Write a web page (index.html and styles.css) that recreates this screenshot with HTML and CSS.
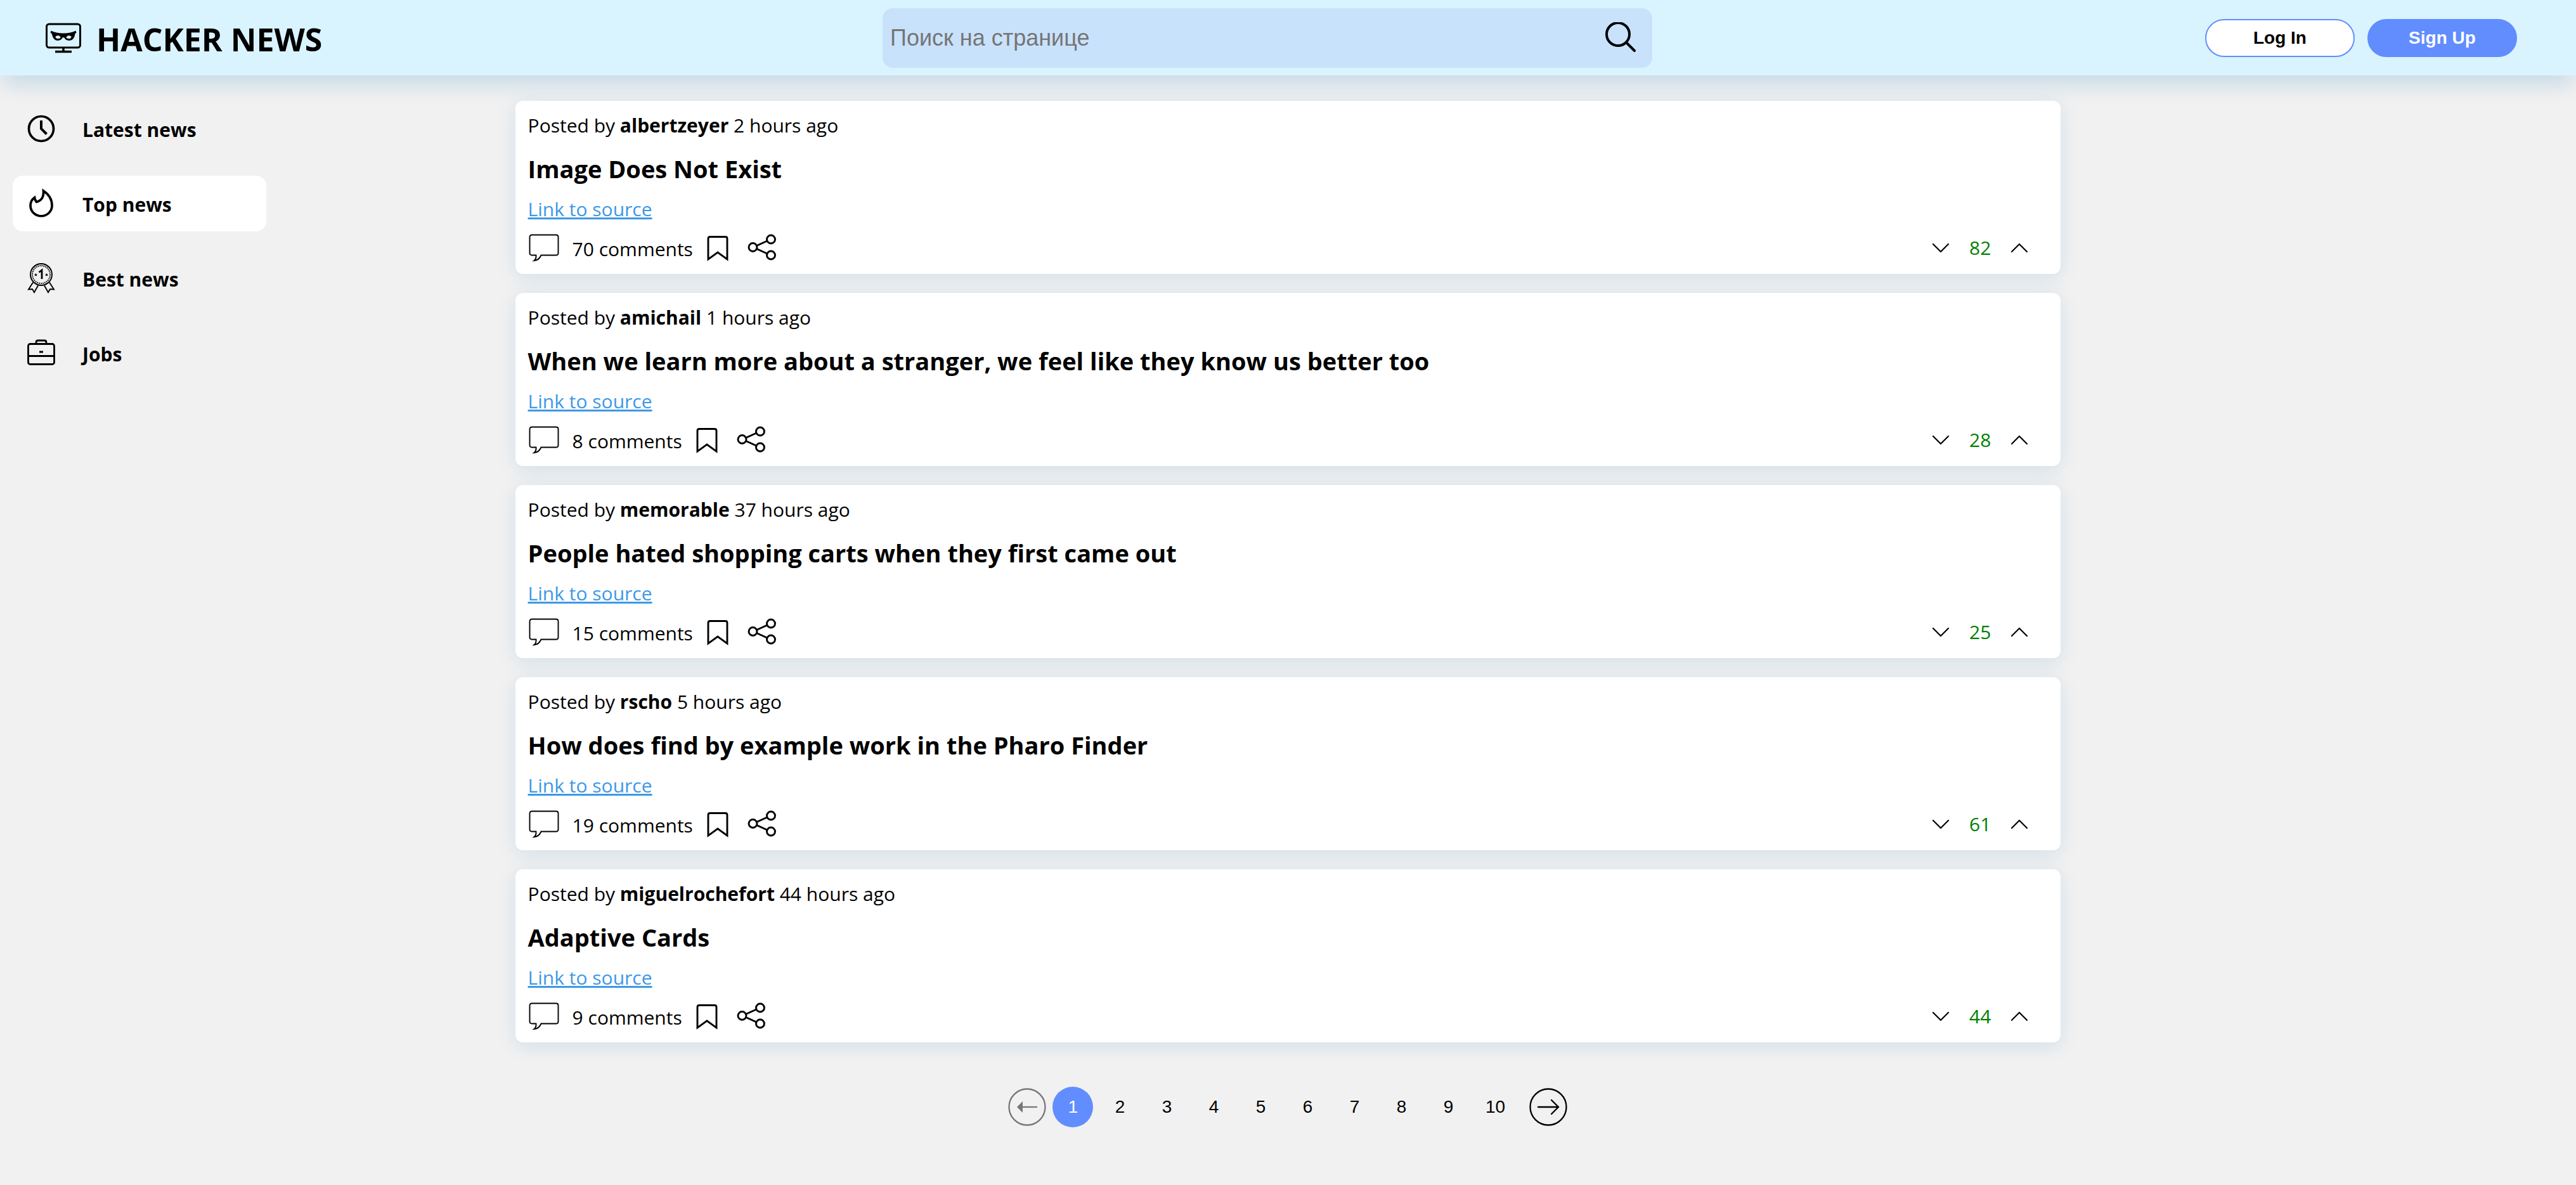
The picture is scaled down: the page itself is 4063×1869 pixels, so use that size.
FILE: index.html
```html
<!DOCTYPE html>
<html lang="en">
<head>
<meta charset="utf-8">
<meta name="viewport" content="width=device-width, initial-scale=1">
<title>Hacker News</title>
<link rel="stylesheet" href="styles.css">
</head>
<body>
<svg class="sprite" aria-hidden="true">
  <symbol id="i-comment" viewBox="0 0 50 50"><path d="M6 4.500h38q3.500 0 3.500 3.500v25q0 3.500-3.500 3.500H20.500Q17 44.500 9.500 45Q13 42.500 12.500 36.500H6q-3.500 0-3.500-3.500v-25Q2.500 4.500 6 4.500z" fill="none" stroke="#000" stroke-width="1.900"/></symbol>
  <symbol id="i-mark" viewBox="0 0 50 50"><path d="M13 7.500h24q3 0 3 3V43L25 32 10 43V10.500q0-3 3-3z" fill="none" stroke="#000" stroke-width="2.900"/></symbol>
  <symbol id="i-share" viewBox="0 0 50 50"><g fill="none" stroke="#000" stroke-width="2.900"><circle cx="10.500" cy="24" r="6.500"/><circle cx="39" cy="11.500" r="6.500"/><circle cx="39" cy="36.500" r="6.500"/><path d="M16.500 21.500l16.500-7.500M16.500 26.500l16.500 7.500"/></g></symbol>
  <symbol id="i-down" viewBox="0 0 50 50"><path d="M13 19l12 12 12-12" fill="none" stroke="#000" stroke-width="2.200" stroke-linecap="round" stroke-linejoin="round"/></symbol>
  <symbol id="i-up" viewBox="0 0 50 50"><path d="M13 31l12-12 12 12" fill="none" stroke="#000" stroke-width="2.200" stroke-linecap="round" stroke-linejoin="round"/></symbol>
</svg>

<header class="header">
  <a class="logo" href="#">
    <svg class="logo-icon" viewBox="0 0 56 48" aria-hidden="true">
      <rect x="1.500" y="2" width="53" height="37" rx="4" fill="none" stroke="#000" stroke-width="3"/>
      <path d="M28 39v6M15 45.500h26" stroke="#000" stroke-width="3.500" fill="none"/>
      <path fill-rule="evenodd" d="M8.500 12.500Q17 16.500 28 16.500T47.500 12.500L48.500 15.500 46.500 17Q45 27.500 38 28Q31.500 28 29.500 23.500Q28 22.500 26.500 23.500Q24.500 28 18 28Q12 27.500 9.500 17L7.500 15.500zM15.500 21.500q0 3.500 4 3.500t4-2.500q-1.500-2.500-4-2.500t-4 1.500zM40.500 21.500q0 3.500-4 3.500t-4-2.500q1.500-2.500 4-2.500t4 1.500z"/>
    </svg>
    <span class="logo-text">HACKER NEWS</span>
  </a>
  <form class="search" role="search">
    <input class="search-input" type="search" placeholder="Поиск на странице" aria-label="Поиск на странице">
    <button class="icon-button" type="button" aria-label="Search">
      <svg class="icon" viewBox="0 0 50 50"><circle cx="20" cy="19" r="18" fill="none" stroke="#000" stroke-width="4"/><path d="M33 32l13 13" stroke="#000" stroke-width="4" stroke-linecap="round"/></svg>
    </button>
  </form>
  <div class="auth">
    <button class="pill" type="button">Log In</button>
    <button class="pill pill-primary" type="button">Sign Up</button>
  </div>
</header>

<div class="layout">
  <nav class="sidebar">
    <a class="nav-item" href="#">
      <svg class="icon" viewBox="0 0 50 50" aria-hidden="true"><circle cx="25" cy="25" r="19.500" fill="none" stroke="#000" stroke-width="3.700"/><path d="M25 12v13l8.500 8.500" fill="none" stroke="#000" stroke-width="4"/></svg>
      <span class="nav-label">Latest news</span>
    </a>
    <a class="nav-item nav-item-active" href="#">
      <svg class="icon" viewBox="0 0 50 50" aria-hidden="true"><path d="M28.500 5Q42 14 42 28a17 16.500 0 0 1-34 .5Q8 20 14.500 15.500Q15 19.500 17.500 22.500Q29.500 19.500 28.500 5z" fill="none" stroke="#000" stroke-width="3.700"/></svg>
      <span class="nav-label">Top news</span>
    </a>
    <a class="nav-item" href="#">
      <svg class="icon" viewBox="0 0 50 50" aria-hidden="true"><g fill="none" stroke="#000" stroke-width="1.900"><circle cx="25" cy="19" r="17"/><circle cx="25" cy="19" r="14" stroke-width="2" stroke-dasharray="1.700 1.300"/><path d="M12 31.500L5 42.500l6-.5 3 5L20 36.500M38 31.500l7 11-6-.5-3 5-6-10.500"/></g><path d="M21.500 15.500l4.500-3.500V26" fill="none" stroke="#000" stroke-width="2.800"/><path d="M16.500 17l.7 1.500 1.800.2-1.300 1.200.3 1.600-1.500-.8-1.500.8.300-1.600-1.300-1.200 1.800-.2zM33.500 17l.7 1.500 1.800.2-1.300 1.200.3 1.600-1.500-.8-1.500.8.300-1.600-1.300-1.200 1.800-.2z"/></svg>
      <span class="nav-label">Best news</span>
    </a>
    <a class="nav-item" href="#">
      <svg class="icon" viewBox="0 0 50 50" aria-hidden="true"><g fill="none" stroke="#000" stroke-width="2.800"><rect x="4.500" y="10.500" width="41" height="32" rx="3"/><path d="M17 10V8q0-3 3-3h10q3 0 3 3v2M4.500 29.500h41"/></g><path d="M22 21.500h6v3h-6z"/></svg>
      <span class="nav-label">Jobs</span>
    </a>
  </nav>

  <main class="feed">
    <article class="card">
      <p class="meta">Posted by <b>albertzeyer</b> 2 hours ago</p>
      <h2 class="title">Image Does Not Exist</h2>
      <a class="source" href="#">Link to source</a>
      <div class="actions">
        <button class="comments" type="button"><svg class="icon"><use href="#i-comment"/></svg><span class="comments-count">70 comments</span></button>
        <div class="tools">
          <button class="icon-button" type="button" aria-label="Save"><svg class="icon"><use href="#i-mark"/></svg></button>
          <button class="icon-button" type="button" aria-label="Share"><svg class="icon"><use href="#i-share"/></svg></button>
        </div>
        <div class="votes">
          <button class="icon-button" type="button" aria-label="Vote down"><svg class="icon"><use href="#i-down"/></svg></button>
          <span>82</span>
          <button class="icon-button" type="button" aria-label="Vote up"><svg class="icon"><use href="#i-up"/></svg></button>
        </div>
      </div>
    </article>
    <article class="card">
      <p class="meta">Posted by <b>amichail</b> 1 hours ago</p>
      <h2 class="title">When we learn more about a stranger, we feel like they know us better too</h2>
      <a class="source" href="#">Link to source</a>
      <div class="actions">
        <button class="comments" type="button"><svg class="icon"><use href="#i-comment"/></svg><span class="comments-count">8 comments</span></button>
        <div class="tools">
          <button class="icon-button" type="button" aria-label="Save"><svg class="icon"><use href="#i-mark"/></svg></button>
          <button class="icon-button" type="button" aria-label="Share"><svg class="icon"><use href="#i-share"/></svg></button>
        </div>
        <div class="votes">
          <button class="icon-button" type="button" aria-label="Vote down"><svg class="icon"><use href="#i-down"/></svg></button>
          <span>28</span>
          <button class="icon-button" type="button" aria-label="Vote up"><svg class="icon"><use href="#i-up"/></svg></button>
        </div>
      </div>
    </article>
    <article class="card">
      <p class="meta">Posted by <b>memorable</b> 37 hours ago</p>
      <h2 class="title">People hated shopping carts when they first came out</h2>
      <a class="source" href="#">Link to source</a>
      <div class="actions">
        <button class="comments" type="button"><svg class="icon"><use href="#i-comment"/></svg><span class="comments-count">15 comments</span></button>
        <div class="tools">
          <button class="icon-button" type="button" aria-label="Save"><svg class="icon"><use href="#i-mark"/></svg></button>
          <button class="icon-button" type="button" aria-label="Share"><svg class="icon"><use href="#i-share"/></svg></button>
        </div>
        <div class="votes">
          <button class="icon-button" type="button" aria-label="Vote down"><svg class="icon"><use href="#i-down"/></svg></button>
          <span>25</span>
          <button class="icon-button" type="button" aria-label="Vote up"><svg class="icon"><use href="#i-up"/></svg></button>
        </div>
      </div>
    </article>
    <article class="card">
      <p class="meta">Posted by <b>rscho</b> 5 hours ago</p>
      <h2 class="title">How does find by example work in the Pharo Finder</h2>
      <a class="source" href="#">Link to source</a>
      <div class="actions">
        <button class="comments" type="button"><svg class="icon"><use href="#i-comment"/></svg><span class="comments-count">19 comments</span></button>
        <div class="tools">
          <button class="icon-button" type="button" aria-label="Save"><svg class="icon"><use href="#i-mark"/></svg></button>
          <button class="icon-button" type="button" aria-label="Share"><svg class="icon"><use href="#i-share"/></svg></button>
        </div>
        <div class="votes">
          <button class="icon-button" type="button" aria-label="Vote down"><svg class="icon"><use href="#i-down"/></svg></button>
          <span>61</span>
          <button class="icon-button" type="button" aria-label="Vote up"><svg class="icon"><use href="#i-up"/></svg></button>
        </div>
      </div>
    </article>
    <article class="card">
      <p class="meta">Posted by <b>miguelrochefort</b> 44 hours ago</p>
      <h2 class="title">Adaptive Cards</h2>
      <a class="source" href="#">Link to source</a>
      <div class="actions">
        <button class="comments" type="button"><svg class="icon"><use href="#i-comment"/></svg><span class="comments-count">9 comments</span></button>
        <div class="tools">
          <button class="icon-button" type="button" aria-label="Save"><svg class="icon"><use href="#i-mark"/></svg></button>
          <button class="icon-button" type="button" aria-label="Share"><svg class="icon"><use href="#i-share"/></svg></button>
        </div>
        <div class="votes">
          <button class="icon-button" type="button" aria-label="Vote down"><svg class="icon"><use href="#i-down"/></svg></button>
          <span>44</span>
          <button class="icon-button" type="button" aria-label="Vote up"><svg class="icon"><use href="#i-up"/></svg></button>
        </div>
      </div>
    </article>

    <nav class="pagination" aria-label="Pages">
      <button class="arrow" type="button" aria-label="Previous page" disabled>
        <svg class="arrow-icon" viewBox="0 0 60 60"><circle cx="30" cy="30" r="28.500" fill="none" stroke="#777" stroke-width="2.300"/><path d="M20 30h26" stroke="#777" stroke-width="2.300"/><path d="M14 30l9-9v18z" fill="#777"/></svg>
      </button>
      <div class="pages">
        <button class="page page-active" type="button" aria-current="page">1</button>
        <button class="page" type="button">2</button>
        <button class="page" type="button">3</button>
        <button class="page" type="button">4</button>
        <button class="page" type="button">5</button>
        <button class="page" type="button">6</button>
        <button class="page" type="button">7</button>
        <button class="page" type="button">8</button>
        <button class="page" type="button">9</button>
        <button class="page" type="button">10</button>
      </div>
      <button class="arrow" type="button" aria-label="Next page">
        <svg class="arrow-icon" viewBox="0 0 60 60"><g fill="none" stroke="#000" stroke-width="2.300"><circle cx="30" cy="30" r="28.500"/><path d="M14 30h32M35 19l11 11-11 11" stroke-linecap="round"/></g></svg>
      </button>
    </nav>
  </main>
</div>
</body>
</html>
```
FILE: styles.css
```css
* {
  box-sizing: border-box;
}

body {
  margin: 0;
  background: #f1f1f1;
  color: #000;
  font-family: "Open Sans", "Noto Sans", sans-serif;
  font-size: 30px;
  line-height: 44px;
}

a {
  color: inherit;
  text-decoration: none;
}

button {
  margin: 0;
  padding: 0;
  border: 0;
  background: none;
  color: inherit;
  font: inherit;
  cursor: pointer;
}

.sprite {
  position: absolute;
  width: 0;
  height: 0;
}

.icon {
  display: block;
  flex: none;
  width: 50px;
  height: 50px;
}

.icon-button {
  flex: none;
}

.header {
  display: flex;
  align-items: center;
  justify-content: space-between;
  height: 119px;
  padding: 0 93px 0 72px;
  background: #d9f4ff;
  box-shadow: 0 20px 30px -5px rgba(20, 120, 190, 0.18);
}

.logo {
  display: flex;
  flex: 0 0 448px;
  align-items: center;
  gap: 24px;
  font-size: 50px;
  font-weight: 700;
  line-height: 64px;
  white-space: nowrap;
}

.logo-icon {
  flex: none;
  width: 56px;
  height: 48px;
}

.logo-text {
  padding-top: 4px;
}

.search {
  display: flex;
  flex: 0 1 1214px;
  align-items: center;
  height: 94px;
  padding: 0 24px 0 12px;
  border-radius: 16px;
  background: #c9e2fc;
}

.search-input {
  flex: 1;
  min-width: 0;
  height: 100%;
  padding: 0;
  border: 0;
  outline: 0;
  background: none;
  font-family: "Liberation Sans", Arial, sans-serif;
  font-size: 36px;
}

.search-input::placeholder {
  color: #757575;
}

.auth {
  display: flex;
  gap: 20px;
}

.pill {
  width: 236px;
  height: 60px;
  border: 2px solid #618dff;
  border-radius: 30px;
  background: #fff;
  font: 700 28px "Liberation Sans", Arial, sans-serif;
}

.pill-primary {
  background: #618dff;
  color: #fff;
}

.layout {
  display: grid;
  grid-template-columns: 1fr 60% 1fr;
  align-items: start;
  padding: 40px 0;
}

.sidebar {
  display: flex;
  flex-direction: column;
  gap: 30px;
  max-width: 420px;
  padding-left: 20px;
}

.nav-item {
  display: flex;
  align-items: center;
  gap: 40px;
  height: 88px;
  padding: 0 20px;
  border-radius: 16px;
  font-weight: 700;
}

.nav-item-active {
  background: #fff;
}

.nav-label {
  padding-top: 4px;
}

.feed {
  display: flex;
  flex-direction: column;
  gap: 30px;
}

.card {
  display: flex;
  flex-direction: column;
  align-items: flex-start;
  gap: 18px;
  padding: 17px 20px;
  border-radius: 12px;
  background: #fff;
  box-shadow: 0 6px 30px rgba(20, 120, 190, 0.14);
}

.meta,
.title {
  margin: 0;
}

.title {
  font-size: 38px;
  font-weight: 700;
  line-height: 56px;
}

.source {
  color: #3d98e6;
  line-height: 36px;
  text-decoration: underline;
}

.actions {
  display: flex;
  align-items: center;
  align-self: stretch;
  gap: 14px;
  height: 49px;
}

.comments {
  display: flex;
  align-items: center;
  gap: 20px;
}

.comments-count {
  padding-top: 4px;
}

.tools {
  display: flex;
  gap: 20px;
}

.votes {
  display: flex;
  align-items: center;
  gap: 20px;
  margin-left: auto;
  padding-right: 20px;
  color: #008000;
}

.pagination {
  display: flex;
  align-items: center;
  justify-content: center;
  gap: 10px;
  margin-top: 40px;
}

.pages {
  display: flex;
  gap: 10px;
  padding-right: 12px;
}

.page {
  width: 64px;
  height: 64px;
  border-radius: 50%;
  font: 28px "Liberation Sans", Arial, sans-serif;
}

.page-active {
  background: #618dff;
  color: #fff;
}

.arrow-icon {
  display: block;
  width: 60px;
  height: 60px;
}
```
